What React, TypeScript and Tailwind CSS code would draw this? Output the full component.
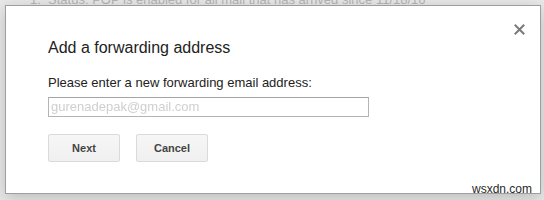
import React from 'react';

const App: React.FC = () => {
  return (
    <div className="relative w-[544px] h-[200px] overflow-hidden bg-[#e9e9e9] pt-[5px] pl-[5px] font-['Liberation_Sans',Arial,sans-serif]">
      {/* settings page text behind the dialog */}
      <div className="absolute top-[-8px] left-[30px] whitespace-nowrap text-[13px] leading-[16px] text-[#b5b5b5]">
        1.&nbsp;&nbsp;Status: <span className="underline">POP</span> is enabled for all mail that has arrived since 11/18/16
      </div>

      {/* --- DIALOG --- */}
      <div className="relative w-[536px] h-[189px] bg-white border border-[#9e9e9e] shadow-[0_4px_16px_rgba(0,0,0,0.2)] pt-[32px] pl-[42px]">
        <button className="absolute top-[18px] right-[15px] w-[11px] h-[11px]" aria-label="Close">
          <svg width="11" height="11" viewBox="0 0 11 11">
            <path d="M1.5 1.5 L9.5 9.5 M9.5 1.5 L1.5 9.5" stroke="#7a7a7a" strokeWidth="2" strokeLinecap="square" />
          </svg>
        </button>

        <h2 className="text-[16px] leading-[20px] text-[#222]">Add a forwarding address</h2>

        <p className="mt-[17px] text-[13px] leading-[16px] text-[#222]">
          Please enter a new forwarding email address:
        </p>

        <div className="mt-[6px] w-[321px] h-[20px] border border-[#b4b4b4] border-t-[#a4a4a4] flex items-center pl-[2px]">
          <span className="text-[13px] leading-[16px] text-[#cfcfcf] blur-[0.4px]">gurenadepak@gmail.com</span>
        </div>

        <div className="mt-[17px] flex gap-[16px]">
          <button className="w-[72px] h-[28px] rounded-[2px] border border-[#dadada] bg-gradient-to-b from-[#f6f6f6] to-[#f0f0f0] text-[11px] font-bold text-[#444]">
            Next
          </button>
          <button className="w-[72px] h-[28px] rounded-[2px] border border-[#dadada] bg-gradient-to-b from-[#f6f6f6] to-[#f0f0f0] text-[11px] font-bold text-[#444]">
            Cancel
          </button>
        </div>
      </div>

      {/* watermark */}
      <div className="absolute top-[182px] left-[472px] text-[12px] leading-[14px] text-[#2a2a2a]">wsxdn.com</div>
    </div>
  );
};

export default App;
